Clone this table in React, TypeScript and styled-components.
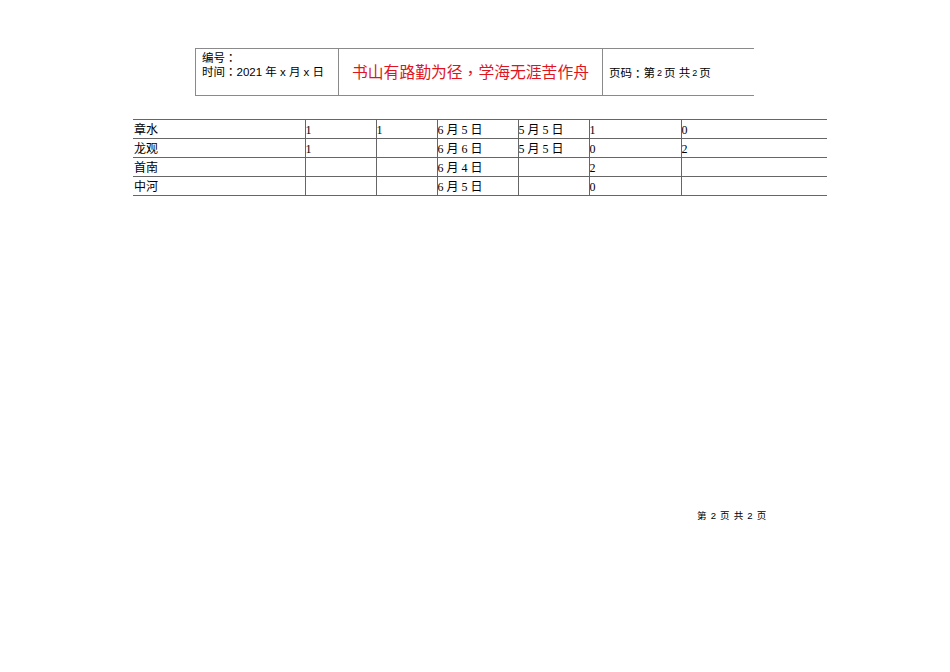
import styled, { createGlobalStyle } from "styled-components";

const Global = createGlobalStyle`
  html, body { margin: 0; padding: 0; background: #fff; }
  body { font-family: "Liberation Sans", "Noto Sans CJK SC", sans-serif; color: #000; }
`;

const Page = styled.div`
  width: 950px;
  height: 672px;
  position: relative;
  display: flex;
  flex-direction: column;
  padding-top: 48px;
  box-sizing: border-box;
`;

const Header = styled.div`
  display: flex;
  margin-left: 195px;
  width: 559px;
  height: 48px;
  border-top: 1px solid #8a8a8a;
  border-bottom: 1px solid #8a8a8a;
  border-left: 1px solid #8a8a8a;
  box-sizing: border-box;
`;

const HeadCell = styled.div<{ $w: number; $last?: boolean }>`
  width: ${(p) => p.$w}px;
  flex: none;
  box-sizing: border-box;
  border-right: ${(p) => (p.$last ? "none" : "1px solid #8a8a8a")};
  font-size: 12px;
  line-height: 14px;
`;

const InfoCell = styled(HeadCell)`
  padding: 1px 0 0 6px;
  font-size: 11.5px;
`;

const InfoLine = styled.div`
  height: 14px;
  line-height: 14px;
`;

const Motto = styled(HeadCell)`
  display: flex;
  align-items: center;
  justify-content: center;
  color: #e0141e;
  font-size: 15.8px;
  padding-top: 2px;
`;

const PageNo = styled(HeadCell)`
  display: flex;
  align-items: center;
  padding-left: 6px;
  padding-top: 2px;
  font-size: 11.5px;
`;

const Punct = styled.span`
  font-family: "Noto Sans CJK TC", sans-serif;
`;

const Small = styled.span`
  font-size: 9px;
  margin: 0 2px;
`;

const Table = styled.table`
  margin-top: 23px;
  margin-left: 133px;
  border-collapse: collapse;
  table-layout: fixed;
  width: 694px;
`;

const Row = styled.tr`
  height: 19px;
`;

const Cell = styled.td<{ $w: number; $first?: boolean }>`
  width: ${(p) => p.$w}px;
  padding: 2px 0 0 ${(p) => (p.$first ? 1 : 0)}px;
  border-top: 1px solid #666;
  border-bottom: 1px solid #666;
  border-left: ${(p) => (p.$first ? "none" : "1px solid #666")};
  border-right: none;
  font-family: ${(p) =>
    p.$first
      ? `"Liberation Sans", "Noto Sans CJK SC", sans-serif`
      : `"Liberation Serif", "Noto Sans CJK SC", serif`};
  font-size: 12px;
  line-height: 16px;
  white-space: nowrap;
  overflow: hidden;
  vertical-align: middle;
  box-sizing: border-box;
`;

const Footer = styled.div`
  position: absolute;
  left: 697px;
  top: 508px;
  font-size: 9.5px;
  word-spacing: 1.5px;
`;

const widths = [172, 71, 61, 81, 71, 92, 146];

const rows = [
  ["章水", "1", "1", "6 月 5 日", "5 月 5 日", "1", "0"],
  ["龙观", "1", "", "6 月 6 日", "5 月 5 日", "0", "2"],
  ["首南", "", "", "6 月 4 日", "", "2", ""],
  ["中河", "", "", "6 月 5 日", "", "0", ""],
];

export default function App() {
  return (
    <>
      <Global />
      <Page>
        <Header>
          <InfoCell $w={143}>
            <InfoLine>
              编号<Punct>：</Punct>
            </InfoLine>
            <InfoLine>
              时间<Punct>：</Punct>2021 年 x 月 x 日
            </InfoLine>
          </InfoCell>
          <Motto $w={264}>
            书山有路勤为径<Punct>，</Punct>学海无涯苦作舟
          </Motto>
          <PageNo $w={151} $last>
            页码<Punct>：</Punct>第<Small>2</Small>页 共<Small>2</Small>页
          </PageNo>
        </Header>
        <Table>
          <tbody>
            {rows.map((r, i) => (
              <Row key={i}>
                {r.map((c, j) => (
                  <Cell key={j} $w={widths[j]} $first={j === 0}>
                    {c}
                  </Cell>
                ))}
              </Row>
            ))}
          </tbody>
        </Table>
        <Footer>第 2 页 共 2 页</Footer>
      </Page>
    </>
  );
}
